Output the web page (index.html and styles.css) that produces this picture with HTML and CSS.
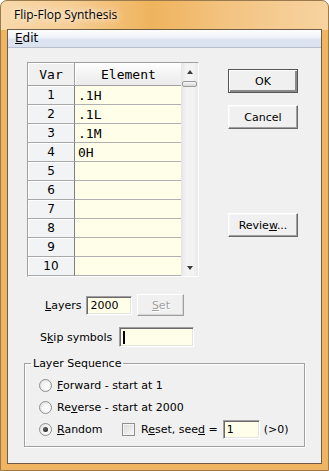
FILE: index.html
```html
<!DOCTYPE html>
<html lang="en">
<head>
  <meta charset="UTF-8" />
  <title>Flip-Flop Synthesis</title>
  <link rel="stylesheet" href="styles.css">
</head>
<body>
  <div class="window">
    <div class="titlebar"><span class="title">Flip-Flop Synthesis</span></div>

    <div class="client">
      <div class="menubar"><span class="menu-item"><u>E</u>dit</span></div>

      <div class="content">
        <div class="top">
          <!-- grid of variables -->
          <div class="grid-wrap">
            <div class="grid">
              <div class="hcell var">Var</div>
              <div class="hcell elem">Element</div>

              <div class="num">1</div><div class="val">.1H</div>
              <div class="num">2</div><div class="val">.1L</div>
              <div class="num">3</div><div class="val">.1M</div>
              <div class="num">4</div><div class="val">0H</div>
              <div class="num">5</div><div class="val"></div>
              <div class="num">6</div><div class="val"></div>
              <div class="num">7</div><div class="val"></div>
              <div class="num">8</div><div class="val"></div>
              <div class="num">9</div><div class="val"></div>
              <div class="num">10</div><div class="val"></div>
            </div>
            <div class="scrollbar">
              <div class="sb-arrow"><span class="tri-up"></span></div>
              <div class="sb-thumb"></div>
              <div class="sb-track"></div>
              <div class="sb-arrow"><span class="tri-down"></span></div>
            </div>
          </div>

          <div class="buttons">
            <button class="btn default">OK</button>
            <button class="btn cancel">Cancel</button>
            <button class="btn review">Revie<u>w</u>...</button>
          </div>
        </div>

        <div class="field-row layers">
          <span class="label"><u>L</u>ayers</span>
          <div class="field layers-field">2000</div>
          <button class="btn small disabled"><u>S</u>et</button>
        </div>

        <div class="field-row skip">
          <span class="label">S<u>k</u>ip symbols</span>
          <div class="field skip-field"><span class="caret"></span></div>
        </div>

        <fieldset class="group">
          <legend>Layer Sequence</legend>
          <div class="option">
            <span class="radio"></span>
            <span class="opt-label"><u>F</u>orward - start at 1</span>
          </div>
          <div class="option">
            <span class="radio"></span>
            <span class="opt-label">Re<u>v</u>erse - start at 2000</span>
          </div>
          <div class="option">
            <span class="radio checked"></span>
            <span class="opt-label random"><u>R</u>andom</span>
            <span class="checkbox"></span>
            <span class="opt-label">R<u>e</u>set, see<u>d</u> =</span>
            <div class="field seed-field">1</div>
            <span class="hint">(&gt;0)</span>
          </div>
        </fieldset>
      </div>
    </div>
  </div>
</body>
</html>
```

FILE: styles.css
```css
* {
  box-sizing: border-box;
}

html, body {
  margin: 0;
  padding: 0;
}

body {
  width: 329px;
  height: 471px;
  overflow: hidden;
  background: #fff;
  font-family: "DejaVu Sans", sans-serif;
  font-size: 11px;
  color: #000;
}

u {
  text-decoration: underline;
  text-underline-offset: 1px;
}

.window {
  width: 329px;
  height: 471px;
  padding: 0 6px 6px 6px;
  border: 1px solid #9a7a4c;
  border-radius: 7px 7px 0 0;
  background:
    linear-gradient(to right, #f8d9ab 0%, #f6cd92 22%, #efb35d 46%, #f3c482 70%, #f7d3a0 100%) top / 100% 29px no-repeat,
    #f0b563;
}

.titlebar {
  height: 28px;
  padding-left: 7px;
  line-height: 28px;
}

.title {
  font-family: "Open Sans", sans-serif;
  font-size: 12px;
  text-shadow: 0 0 6px #fff, 0 0 10px rgba(255, 255, 255, 0.9);
}

.client {
  height: 435px;
  border: 1px solid #6f5d48;
  background: #f0f0f0;
}

.menubar {
  height: 18px;
  padding-left: 7px;
  line-height: 17px;
  font-size: 12px;
  background: linear-gradient(#fcfdfe, #eef2f9 45%, #dde4f1 55%, #dae2f0);
  border-bottom: 1px solid #b8bfcd;
}

.content {
  padding: 14px 0 0 16px;
}

.top {
  display: flex;
  margin-left: 3px;
}

/* grid */
.grid-wrap {
  display: flex;
  width: 172px;
  height: 215px;
  border-top: 1px solid #a0a0a0;
  border-left: 1px solid #a0a0a0;
  border-right: 1px solid #fff;
  border-bottom: 1px solid #fff;
}

.grid {
  display: grid;
  grid-template-columns: 47px 106px;
  grid-auto-rows: 19px;
  grid-template-rows: 23px;
  align-content: start;
}

.hcell {
  display: flex;
  align-items: center;
  justify-content: center;
  font-family: "DejaVu Sans Mono", monospace;
  font-size: 13px;
  border-bottom: 1px solid #a0a0a0;
  background: linear-gradient(#ffffff, #f3f3f3 50%, #ebebeb);
}

.hcell.var {
  background: #f0f0f0;
  border-right: 1px solid #a0a0a0;
  box-shadow: inset 1px 1px #fff;
}

.hcell.elem {
  justify-content: flex-start;
  padding-left: 26px;
  box-shadow: inset 1px 0 #fff;
}

.num {
  display: flex;
  align-items: center;
  justify-content: center;
  font-size: 12px;
  background: #f2f3f5;
  border-bottom: 1px solid #a8a8a8;
  border-right: 1px solid #808080;
  box-shadow: inset 1px 1px #fff;
}

.val {
  display: flex;
  align-items: center;
  padding-left: 3px;
  font-family: "DejaVu Sans Mono", monospace;
  font-size: 13px;
  background: #fffee8;
  border-bottom: 1px solid #b0b0b0;
}

.scrollbar {
  display: flex;
  flex-direction: column;
  width: 17px;
  background: linear-gradient(to right, #e6e6e6, #f3f3f3 30%, #f3f3f3 70%, #e9e9e9);
}

.sb-arrow {
  height: 17px;
  display: flex;
  align-items: center;
  justify-content: center;
}

.tri-up, .tri-down {
  width: 0;
  height: 0;
  border-left: 3.5px solid transparent;
  border-right: 3.5px solid transparent;
}

.tri-up {
  border-bottom: 4px solid #3c3c3c;
}

.tri-down {
  border-top: 4px solid #3c3c3c;
}

.sb-thumb {
  height: 6px;
  margin: 1px 1px 0 1px;
  border: 1px solid #9a9a9a;
  border-radius: 2px;
  background: linear-gradient(#f6f6f6, #d8d8d8);
}

.sb-track {
  flex: 1;
}

/* buttons */
.buttons {
  display: flex;
  flex-direction: column;
  margin-left: 29px;
  padding-top: 7px;
}

.btn {
  width: 70px;
  height: 24px;
  padding: 0;
  font-family: "DejaVu Sans", sans-serif;
  font-size: 11px;
  color: #000;
  background: #f0f0f0;
  border: 1px solid;
  border-color: #fff #696969 #696969 #fff;
  box-shadow: inset -1px -1px #a0a0a0, inset 1px 1px #f8f8f8;
}

.btn.default {
  border-color: #555;
  box-shadow: inset 1px 1px #fff, inset -2px -2px #8a8a8a;
}

.btn.cancel {
  margin-top: 12px;
}

.btn.review {
  margin-top: 84px;
}

.btn.small {
  width: 47px;
  height: 22px;
  margin-left: 5px;
}

.btn.disabled {
  color: #a0a0a0;
  text-shadow: 1px 1px #fff;
  border-color: #fff #a0a0a0 #a0a0a0 #fff;
  box-shadow: inset -1px -1px #d6d6d6;
}

/* fields */
.field-row {
  display: flex;
  align-items: center;
}

.field-row.layers {
  margin-top: 17px;
  margin-left: 21px;
  height: 22px;
}

.field-row.skip {
  margin-top: 11px;
  margin-left: 16px;
  height: 20px;
}

.label {
  margin-right: 5px;
}

.skip .label {
  margin-right: 7px;
}

.field {
  display: flex;
  align-items: center;
  height: 19px;
  padding-left: 3px;
  background: #fffee8;
  border: 1px solid;
  border-color: #a0a0a0 #fff #fff #a0a0a0;
  box-shadow: inset 1px 1px #696969, inset -1px -1px #e3e3e3;
  font-size: 11px;
}

.layers-field {
  width: 46px;
}

.skip-field {
  width: 75px;
  height: 20px;
}

.caret {
  width: 2px;
  height: 13px;
  background: #000;
}

.seed-field {
  width: 37px;
  margin-left: 5px;
}

/* group box */
.group {
  width: 281px;
  margin: 10px 0 0 0;
  padding: 4px 0 6px 0;
  border: 1px solid #a0a0a0;
  box-shadow: inset 1px 1px #fff, 1px 1px #fff;
}

.group legend {
  margin-left: 6px;
  padding: 0 2px;
  line-height: 13px;
}

.option {
  display: flex;
  align-items: center;
  height: 22px;
  padding-left: 14px;
}

.radio {
  width: 13px;
  height: 13px;
  margin-right: 5px;
  border-radius: 50%;
  border: 1px solid #8e8f8f;
  background: radial-gradient(circle at 60% 60%, #ffffff 0%, #f3f3f3 45%, #d9d9d9 100%);
  display: flex;
  align-items: center;
  justify-content: center;
}

.radio.checked::after {
  content: "";
  width: 5px;
  height: 5px;
  border-radius: 50%;
  background: radial-gradient(circle at 40% 40%, #666, #111);
}

.opt-label.random {
  width: 65px;
}

.checkbox {
  width: 13px;
  height: 13px;
  margin-right: 6px;
  border: 1px solid #8e8f8f;
  background: linear-gradient(135deg, #dadada, #f8f8f8);
  box-shadow: inset 0 0 0 1px #f4f4f4;
}

.hint {
  margin-left: 4px;
}
```
